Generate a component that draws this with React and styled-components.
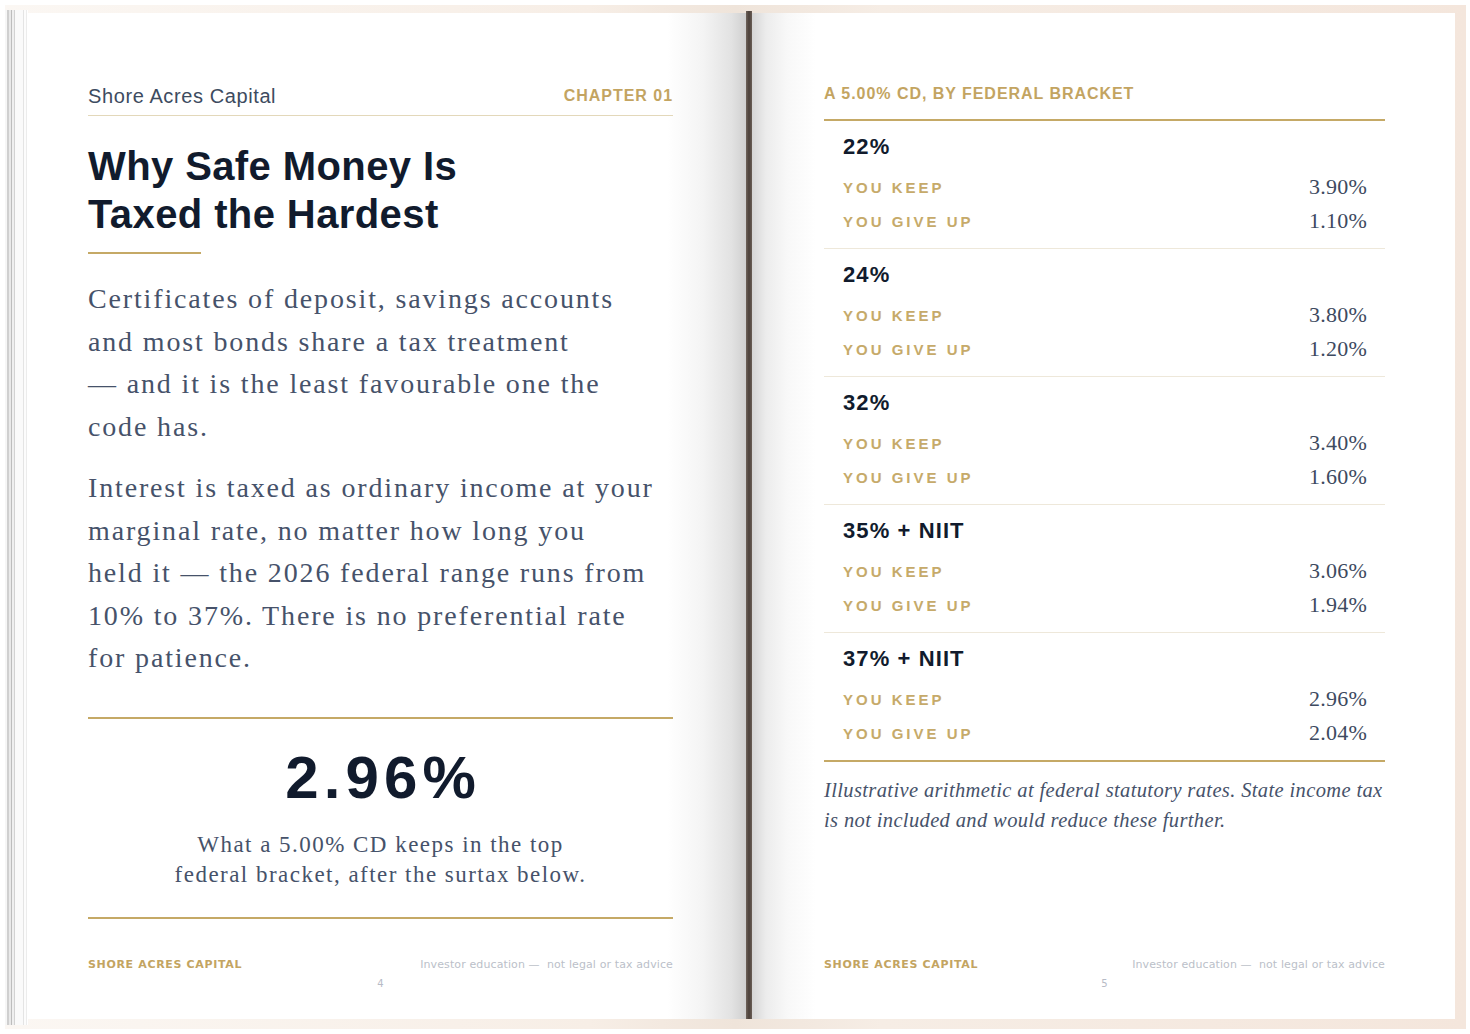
import React from "react";
import styled, { createGlobalStyle } from "styled-components";

const GlobalStyle = createGlobalStyle`
  html, body {
    margin: 0;
    padding: 0;
    background: #ffffff;
  }
  * { box-sizing: border-box; }
`;

const gold = "#c3a461";
const goldRule = "#c5a966";
const navy = "#111b2d";
const slate = "#46526a";

const Desk = styled.div`
  width: 1470px;
  height: 1034px;
  padding: 5px 4px 5px 5px;
  background: #ffffff;
`;

const Book = styled.div`
  display: flex;
  height: 1024px;
  padding: 8px 11px 10px 0;
  background: linear-gradient(to right, #fbf7f3 0%, #f7eee6 40%, #efe4da 50%, #f6ede5 60%, #f4e6dc 100%);
`;

const PageStack = styled.div`
  width: 23px;
  margin: -3px 0 -6px 0;
  background: linear-gradient(
    to right,
    #f6f6f6 0 2px,
    #cfcfcf 2px 4px,
    #e9e9e9 4px 6px,
    #bdbdbd 6px 7px,
    #efefef 7px 9px,
    #d2d2d2 9px 10px,
    #fafafa 10px 18px,
    #e4e4e4 18px 19px,
    #fcfcfc 19px 21px,
    #ececec 21px 22px,
    #ffffff 22px 23px
  );
`;

const Page = styled.section`
  display: flex;
  flex-direction: column;
  width: ${(p) => (p.$side === "left" ? "718px" : "703px")};
  padding: ${(p) => (p.$side === "left" ? "71px 73px 28px 60px" : "71px 70px 28px 72px")};
  background: ${(p) =>
    p.$side === "left"
      ? "linear-gradient(to right, #ffffff 0%, #ffffff 89%, #f4f4f4 94%, #e2e2e2 98%, #cfcfcf 100%)"
      : "linear-gradient(to right, #d6d6d6 0%, #ececec 2%, #f8f8f8 5%, #ffffff 9%, #ffffff 100%)"};
`;

const Spine = styled.div`
  width: 6px;
  margin-top: -2px;
  background: linear-gradient(to right, #6e625a, #4b403a 50%, #6a5e56);
`;

const Header = styled.header`
  display: flex;
  justify-content: space-between;
  align-items: center;
  height: 32px;
  padding-bottom: 7px;
  border-bottom: 1px solid #e3d8ba;
`;

const Brand = styled.span`
  font-family: "Liberation Sans", Arial, sans-serif;
  font-size: 20px;
  line-height: 24px;
  letter-spacing: 0.03em;
  color: #3d4b60;
`;

const Eyebrow = styled.span`
  font-family: "Liberation Sans", Arial, sans-serif;
  font-weight: 700;
  font-size: 16px;
  line-height: 20px;
  letter-spacing: 0.06em;
  color: ${gold};
`;

const Title = styled.h1`
  margin: 26px 0 0;
  font-family: "Liberation Sans", Arial, sans-serif;
  font-weight: 700;
  font-size: 40px;
  line-height: 48px;
  letter-spacing: 0.01em;
  color: ${navy};
`;

const ShortRule = styled.div`
  width: 113px;
  height: 2px;
  margin-top: 14px;
  background: ${goldRule};
`;

const Body = styled.p`
  margin: ${(p) => (p.$first ? "24px" : "19px")} 0 0;
  font-family: "Liberation Serif", "Times New Roman", serif;
  font-size: 28px;
  line-height: 42.5px;
  letter-spacing: 0.066em;
  white-space: nowrap;
  color: ${slate};
`;

const Stat = styled.div`
  margin-top: 37px;
  padding: 29px 0 27px;
  border-top: 2px solid ${goldRule};
  border-bottom: 2px solid ${goldRule};
  text-align: center;
`;

const StatNumber = styled.div`
  font-family: "Liberation Sans", Arial, sans-serif;
  font-weight: 700;
  font-size: 60px;
  line-height: 60px;
  letter-spacing: 0.085em;
  padding-left: 0.085em;
  color: ${navy};
`;

const StatCaption = styled.p`
  margin: 22px 0 0;
  font-family: "Liberation Serif", "Times New Roman", serif;
  font-size: 23px;
  line-height: 30px;
  letter-spacing: 0.064em;
  color: ${slate};
`;

const Footer = styled.footer`
  margin-top: auto;
  display: flex;
  flex-direction: column;
  gap: 5px;
`;

const FooterRow = styled.div`
  display: flex;
  justify-content: space-between;
  align-items: baseline;
  line-height: 14px;
`;

const FooterBrand = styled.span`
  font-family: "DejaVu Sans", sans-serif;
  font-weight: 700;
  font-size: 11px;
  letter-spacing: 0.06em;
  color: ${gold};
`;

const FooterNote = styled.span`
  font-family: "DejaVu Sans", sans-serif;
  font-size: 11px;
  letter-spacing: 0.01em;
  color: #bbbfc9;
`;

const PageNumber = styled.div`
  font-family: "DejaVu Sans", sans-serif;
  font-size: 10px;
  line-height: 14px;
  text-align: center;
  color: #b7bbc6;
`;

const TableHead = styled.div`
  padding-bottom: 15px;
  border-bottom: 2px solid ${goldRule};
`;

const Bracket = styled.div`
  padding: 12px 18px 14px 19px;
  border-bottom: ${(p) => (p.$last ? "none" : "1px solid #eee8da")};
`;

const BracketName = styled.div`
  margin-bottom: 13px;
  font-family: "Liberation Sans", Arial, sans-serif;
  font-weight: 700;
  font-size: 22px;
  line-height: 28px;
  letter-spacing: 0.05em;
  color: ${navy};
`;

const Row = styled.div`
  display: flex;
  justify-content: space-between;
  align-items: center;
  height: 26px;
  & + & {
    margin-top: 8px;
  }
`;

const RowLabel = styled.span`
  font-family: "Liberation Sans", Arial, sans-serif;
  font-weight: 700;
  font-size: 15px;
  letter-spacing: 0.2em;
  color: #c6aa6a;
`;

const RowValue = styled.span`
  font-family: "Liberation Serif", "Times New Roman", serif;
  font-size: 22px;
  letter-spacing: 0.01em;
  color: #3d4a60;
`;

const TableEnd = styled.div`
  height: 2px;
  background: ${goldRule};
`;

const Note = styled.p`
  margin: 13px 0 0;
  font-family: "Liberation Serif", "Times New Roman", serif;
  font-style: italic;
  font-size: 20.5px;
  line-height: 30px;
  letter-spacing: 0.018em;
  white-space: nowrap;
  color: ${slate};
`;

const brackets = [
  { name: "22%", keep: "3.90%", give: "1.10%" },
  { name: "24%", keep: "3.80%", give: "1.20%" },
  { name: "32%", keep: "3.40%", give: "1.60%" },
  { name: "35% + NIIT", keep: "3.06%", give: "1.94%" },
  { name: "37% + NIIT", keep: "2.96%", give: "2.04%" },
];

function PageFooter({ number }) {
  return (
    <Footer>
      <FooterRow>
        <FooterBrand>SHORE ACRES CAPITAL</FooterBrand>
        <FooterNote>Investor education —&nbsp; not legal or tax advice</FooterNote>
      </FooterRow>
      <PageNumber>{number}</PageNumber>
    </Footer>
  );
}

export default function App() {
  return (
    <>
      <GlobalStyle />
      <Desk>
        <Book>
          <PageStack />
          <Page $side="left">
            <Header>
              <Brand>Shore Acres Capital</Brand>
              <Eyebrow>CHAPTER 01</Eyebrow>
            </Header>
            <Title>
              Why Safe Money Is
              <br />
              Taxed the Hardest
            </Title>
            <ShortRule />
            <Body $first>
              Certificates of deposit, savings accounts
              <br />
              and most bonds share a tax treatment
              <br />
              — and it is the least favourable one the
              <br />
              code has.
            </Body>
            <Body>
              Interest is taxed as ordinary income at your
              <br />
              marginal rate, no matter how long you
              <br />
              held it — the 2026 federal range runs from
              <br />
              10% to 37%. There is no preferential rate
              <br />
              for patience.
            </Body>
            <Stat>
              <StatNumber>2.96%</StatNumber>
              <StatCaption>
                What a 5.00% CD keeps in the top
                <br />
                federal bracket, after the surtax below.
              </StatCaption>
            </Stat>
            <PageFooter number={4} />
          </Page>
          <Spine />
          <Page $side="right">
            <TableHead>
              <Eyebrow>A 5.00% CD, BY FEDERAL BRACKET</Eyebrow>
            </TableHead>
            {brackets.map((b, i) => (
              <Bracket key={b.name} $last={i === brackets.length - 1}>
                <BracketName>{b.name}</BracketName>
                <Row>
                  <RowLabel>YOU KEEP</RowLabel>
                  <RowValue>{b.keep}</RowValue>
                </Row>
                <Row>
                  <RowLabel>YOU GIVE UP</RowLabel>
                  <RowValue>{b.give}</RowValue>
                </Row>
              </Bracket>
            ))}
            <TableEnd />
            <Note>
              Illustrative arithmetic at federal statutory rates. State income tax
              <br />
              is not included and would reduce these further.
            </Note>
            <PageFooter number={5} />
          </Page>
        </Book>
      </Desk>
    </>
  );
}
